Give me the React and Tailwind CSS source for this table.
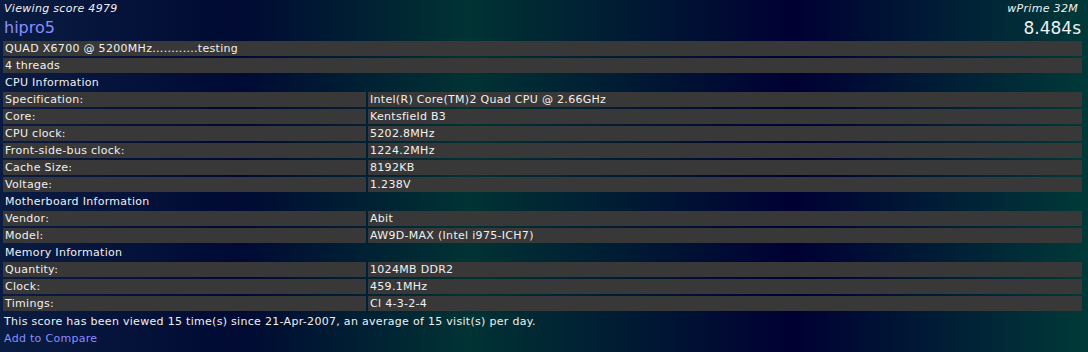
const cpu = [
  ["Specification:", "Intel(R) Core(TM)2 Quad CPU @ 2.66GHz"],
  ["Core:", "Kentsfield B3"],
  ["CPU clock:", "5202.8MHz"],
  ["Front-side-bus clock:", "1224.2MHz"],
  ["Cache Size:", "8192KB"],
  ["Voltage:", "1.238V"],
];

const board = [
  ["Vendor:", "Abit"],
  ["Model:", "AW9D-MAX (Intel i975-ICH7)"],
];

const memory = [
  ["Quantity:", "1024MB DDR2"],
  ["Clock:", "459.1MHz"],
  ["Timings:", "Cl 4-3-2-4"],
];

function Row({ label, value }) {
  return (
    <div className="flex gap-[2px] h-[15px]">
      <div className="w-[363px] shrink-0 bg-[#383838] px-[2px] leading-[15px]">{label}</div>
      <div className="flex-1 bg-[#383838] px-[2px] leading-[15px]">{value}</div>
    </div>
  );
}

function Heading({ children }) {
  return <div className="h-[15px] px-[2px] leading-[15px]">{children}</div>;
}

export default function App() {
  return (
    <div
      className="w-[1088px] h-[352px] overflow-hidden text-[11px] tracking-[0.3px] text-[#f0f0f0] bg-[linear-gradient(90deg,#0a1c42_0%,#000a33_22%,#003333_43%,#001a33_58%,#000033_73%,#003a38_100%)]"
      style={{ fontFamily: '"DejaVu Sans", Verdana, sans-serif' }}
    >
      <div className="flex justify-between pl-[4px] pr-[7px] pt-[2px]">
        <div>
          <div className="italic leading-[14px] text-[11px]">Viewing score 4979</div>
          <div className="text-[#8c8cff] text-[16px] leading-[24px] tracking-normal">hipro5</div>
        </div>
        <div className="text-right">
          <div className="italic leading-[14px] text-[11px] pr-[3px]">wPrime 32M</div>
          <div className="text-[17px] leading-[24px] tracking-normal">8.484s</div>
        </div>
      </div>
      <div className="flex flex-col gap-[2px] pl-[3px] pr-[6px] mt-[1px]">
        <div className="h-[15px] bg-[#383838] px-[2px] leading-[15px]">QUAD X6700 @ 5200MHz............testing</div>
        <div className="h-[15px] bg-[#383838] px-[2px] leading-[15px]">4 threads</div>
        <Heading>CPU Information</Heading>
        {cpu.map(([l, v]) => (
          <Row key={l} label={l} value={v} />
        ))}
        <Heading>Motherboard Information</Heading>
        {board.map(([l, v]) => (
          <Row key={l} label={l} value={v} />
        ))}
        <Heading>Memory Information</Heading>
        {memory.map(([l, v]) => (
          <Row key={l} label={l} value={v} />
        ))}
      </div>
      <div className="px-[4px] mt-[2px] leading-[17px]">
        This score has been viewed 15 time(s) since 21-Apr-2007, an average of 15 visit(s) per day.
      </div>
      <div className="px-[4px] leading-[17px] text-[#8c8cff]">Add to Compare</div>
    </div>
  );
}
